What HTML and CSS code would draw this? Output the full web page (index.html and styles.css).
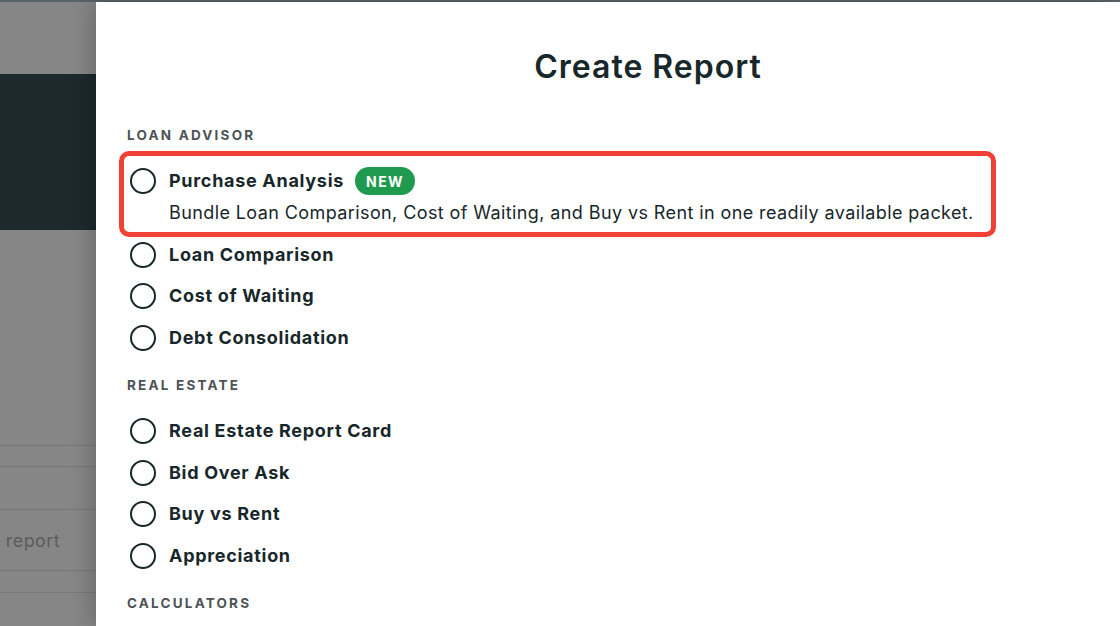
FILE: index.html
```html
<!DOCTYPE html>
<html lang="en">
<head>
    <meta charset="UTF-8">
    <meta name="viewport" content="width=device-width, initial-scale=1.0">
    <title>Create Report</title>
    <link rel="stylesheet" href="styles.css">
</head>
<body>
    <div class="topbar"></div>
    <div class="page">
        <!-- app behind the drawer, dimmed -->
        <div class="backdrop">
            <div class="app-nav"></div>
            <div class="app-hero"></div>
            <div class="app-list">
                <div class="app-row r1"></div>
                <div class="app-row r2"></div>
                <div class="app-row r3"><span>report</span></div>
                <div class="app-row r4"></div>
                <div class="app-row r5"></div>
            </div>
        </div>

        <div class="panel">
            <h1>Create Report</h1>

            <h3 class="section">Loan Advisor</h3>
            <div class="option highlighted">
                <div class="option-row">
                    <span class="radio"></span>
                    <span class="label">Purchase Analysis</span>
                    <span class="badge">NEW</span>
                </div>
                <p class="desc">Bundle Loan Comparison, Cost of Waiting, and Buy vs Rent in one readily available packet.</p>
            </div>
            <div class="option">
                <div class="option-row"><span class="radio"></span><span class="label">Loan Comparison</span></div>
            </div>
            <div class="option">
                <div class="option-row"><span class="radio"></span><span class="label">Cost of Waiting</span></div>
            </div>
            <div class="option">
                <div class="option-row"><span class="radio"></span><span class="label">Debt Consolidation</span></div>
            </div>

            <h3 class="section">Real Estate</h3>
            <div class="option">
                <div class="option-row"><span class="radio"></span><span class="label">Real Estate Report Card</span></div>
            </div>
            <div class="option">
                <div class="option-row"><span class="radio"></span><span class="label">Bid Over Ask</span></div>
            </div>
            <div class="option">
                <div class="option-row"><span class="radio"></span><span class="label">Buy vs Rent</span></div>
            </div>
            <div class="option">
                <div class="option-row"><span class="radio"></span><span class="label">Appreciation</span></div>
            </div>

            <h3 class="section">Calculators</h3>
        </div>
    </div>
</body>
</html>
```

FILE: styles.css
```css
*, *::before, *::after {
    box-sizing: border-box;
}
html, body {
    margin: 0;
    padding: 0;
    height: 100%;
    overflow: hidden;
}
body {
    font-family: Inter, 'Noto Sans', Arial, sans-serif;
    color: #17272a;
    background: #ffffff;
}
.topbar {
    height: 2px;
    background-color: #59636a;
}
.page {
    display: flex;
    height: 624px;
}

/* dimmed app behind */
.backdrop {
    width: 96px;
    flex-shrink: 0;
    background-color: #868686;
    overflow: hidden;
}
.app-nav {
    height: 72px;
}
.app-hero {
    height: 156px;
    background-color: #1c2a2d;
}
.app-list {
    margin-top: 215px;
}
.app-row {
    border-top: 1px solid #787878;
    display: flex;
    align-items: center;
    justify-content: flex-end;
    padding-right: 36px;
    white-space: nowrap;
}
.r1 { height: 21px; }
.r2 { height: 43px; }
.r3 { height: 61px; }
.r4 { height: 22px; }
.r5 { height: 30px; }
.app-row span {
    font-size: 18px;
    letter-spacing: 0.4px;
    color: #5c5c5c;
}

/* drawer */
.panel {
    flex: 1;
    background-color: #ffffff;
    padding: 0 0 0 31px;
    box-shadow: -6px 0 18px rgba(0, 0, 0, 0.18);
    position: relative;
}
h1 {
    margin: 44.5px 0 0;
    padding-left: 49px;
    text-align: center;
    font-size: 32px;
    line-height: 40px;
    font-weight: 600;
    letter-spacing: 1px;
}
.section {
    margin: 18.25px 0 17.75px;
    font-size: 13.5px;
    line-height: 16px;
    font-weight: 700;
    letter-spacing: 2.2px;
    text-transform: uppercase;
    color: #4d5356;
}
h1 + .section {
    margin-top: 40px;
}
.option {
    padding: 8.75px 0 8.75px 3px;
}
.option-row {
    display: flex;
    align-items: center;
    height: 24px;
}
.radio {
    width: 26px;
    height: 26px;
    border: 2.5px solid #17272a;
    border-radius: 50%;
    margin-right: 13px;
    flex-shrink: 0;
}
.label {
    font-size: 18px;
    font-weight: 700;
    line-height: 24px;
    letter-spacing: 0.7px;
}
.badge {
    margin-left: 11px;
    width: 60px;
    height: 28px;
    border-radius: 14px;
    background-color: #1f9a4e;
    color: #ffffff;
    font-size: 14px;
    font-weight: 700;
    letter-spacing: 1.4px;
    display: flex;
    align-items: center;
    justify-content: center;
}
.desc {
    margin: 8px 0 0 39px;
    font-size: 18px;
    line-height: 24px;
    letter-spacing: 0.4px;
    white-space: nowrap;
}

/* annotation frame */
.highlighted {
    position: relative;
}
.highlighted::after {
    content: "";
    position: absolute;
    left: -8px;
    top: -9.25px;
    width: 877px;
    height: 86px;
    border: 5px solid #ef4136;
    border-radius: 10px;
}
```
